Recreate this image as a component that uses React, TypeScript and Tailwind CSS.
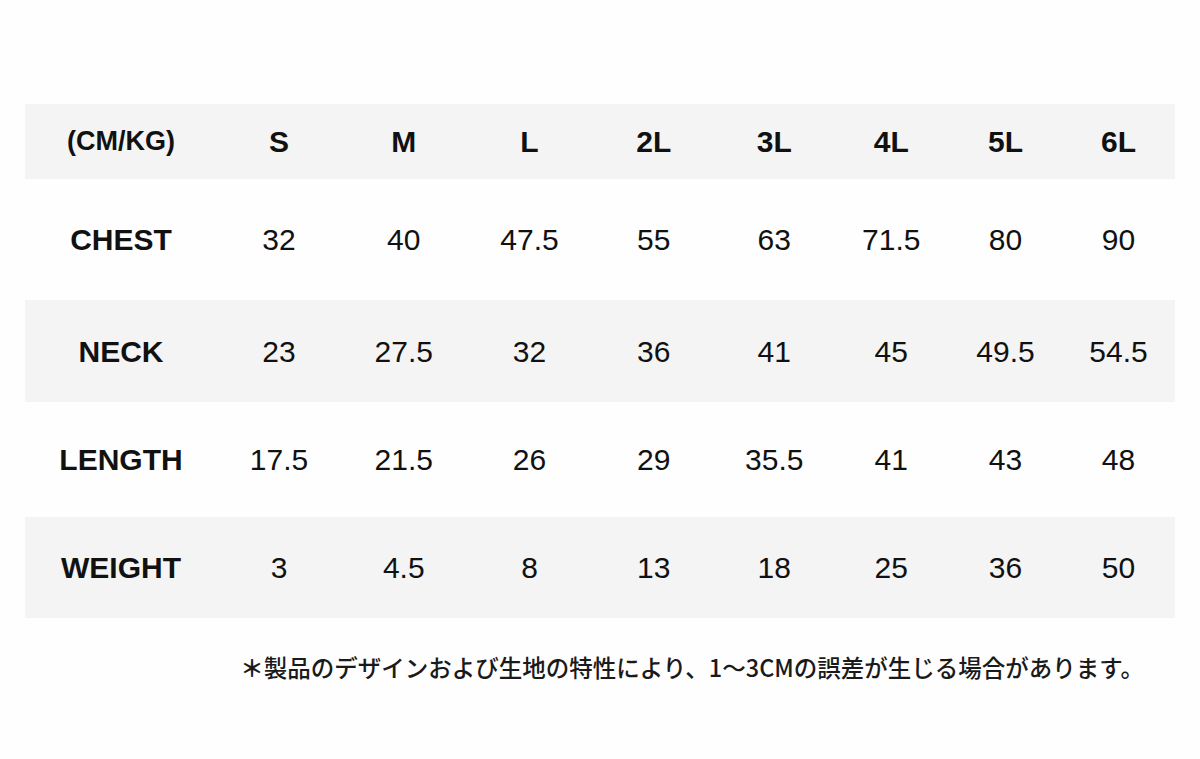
import React from 'react';

const SIZES = ['S', 'M', 'L', '2L', '3L', '4L', '5L', '6L'];

const ROWS: { label: string; values: string[]; height: string; shaded: boolean }[] = [
  { label: 'CHEST', values: ['32', '40', '47.5', '55', '63', '71.5', '80', '90'], height: 'h-[121px]', shaded: false },
  { label: 'NECK', values: ['23', '27.5', '32', '36', '41', '45', '49.5', '54.5'], height: 'h-[102px]', shaded: true },
  { label: 'LENGTH', values: ['17.5', '21.5', '26', '29', '35.5', '41', '43', '48'], height: 'h-[115px]', shaded: false },
  { label: 'WEIGHT', values: ['3', '4.5', '8', '13', '18', '25', '36', '50'], height: 'h-[101px]', shaded: true },
];

// column widths picked so each centre lines up with the reference
const GRID = 'grid grid-cols-[192px_124px_125.5px_126px_122.5px_118.5px_115.5px_113px_113px] items-center';

const App: React.FC = () => {
  return (
    <div className="min-h-[759px] w-[1200px] bg-[#fefefe] text-[#111] pt-[104px] px-[25px] font-['Liberation_Sans',Arial,sans-serif]">
      {/* header row */}
      <div className={`${GRID} h-[75px] bg-[#f4f4f4]`}>
        <div className="text-center text-[27px] font-bold">(CM/KG)</div>
        {SIZES.map((s) => (
          <div key={s} className="text-center text-[30px] font-bold">
            {s}
          </div>
        ))}
      </div>

      {ROWS.map((row) => (
        <div key={row.label} className={`${GRID} ${row.height} ${row.shaded ? 'bg-[#f4f4f4]' : ''}`}>
          <div className="text-center text-[30px] font-bold">{row.label}</div>
          {row.values.map((v, i) => (
            <div key={i} className="text-center text-[30px]">
              {v}
            </div>
          ))}
        </div>
      ))}

      <div className="flex justify-end pr-[31px] mt-[33px]">
        <p className="text-[23.5px] leading-[32px] font-medium text-[#1a1a1a] font-['Noto_Sans_CJK_JP',sans-serif]">
          <span className="font-bold">＊</span>製品のデザインおよび生地の特性により、1～3CMの誤差が生じる場合があります。
        </p>
      </div>
    </div>
  );
};

export default App;
